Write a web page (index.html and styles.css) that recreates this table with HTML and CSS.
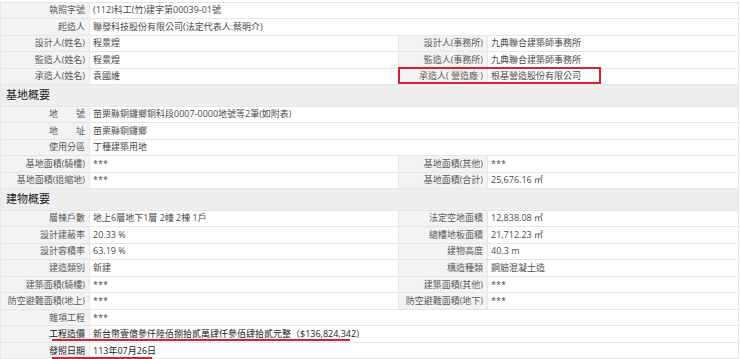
FILE: index.html
```html
<!DOCTYPE html>
<html lang="zh-Hant">
<head>
<meta charset="utf-8">
<title>建造執照資料</title>
<link rel="stylesheet" href="styles.css">
</head>
<body>
<div class="sheet">
<table class="info">
<colgroup><col class="c-label"><col class="c-value"><col class="c-label"><col class="c-value2"></colgroup>
<tbody>
<tr><th>執照字號</th><td colspan="3">(112)科工(竹)建字第00039-01號</td></tr>
<tr><th>起造人</th><td colspan="3">聯發科技股份有限公司(法定代表人:蔡明介)</td></tr>
<tr><th>設計人(姓名)</th><td>程景煌</td><th>設計人(事務所)</th><td>九典聯合建築師事務所</td></tr>
<tr><th>監造人(姓名)</th><td>程景煌</td><th>監造人(事務所)</th><td>九典聯合建築師事務所</td></tr>
<tr><th>承造人(姓名)</th><td>袁國維</td><th>承造人( 營造廠 )</th><td>根基營造股份有限公司</td></tr>
<tr class="section"><td colspan="4">基地概要</td></tr>
<tr><th>地　　號</th><td colspan="3">苗栗縣銅鑼鄉銅科段0007-0000地號等2筆(如附表)</td></tr>
<tr><th>地　　址</th><td colspan="3">苗栗縣銅鑼鄉</td></tr>
<tr><th>使用分區</th><td colspan="3">丁種建築用地</td></tr>
<tr><th>基地面積(騎樓)</th><td>***</td><th>基地面積(其他)</th><td>***</td></tr>
<tr><th>基地面積(退縮地)</th><td>***</td><th>基地面積(合計)</th><td>25,676.16 ㎡</td></tr>
<tr class="section"><td colspan="4">建物概要</td></tr>
<tr><th>層棟戶數</th><td>地上6層地下1層 2幢 2棟 1戶</td><th>法定空地面積</th><td>12,838.08 ㎡</td></tr>
<tr><th>設計建蔽率</th><td>20.33 %</td><th>總樓地板面積</th><td>21,712.23 ㎡</td></tr>
<tr><th>設計容積率</th><td>63.19 %</td><th>建物高度</th><td>40.3 m</td></tr>
<tr><th>建造類別</th><td>新建</td><th>構造種類</th><td>鋼筋混凝土造</td></tr>
<tr><th>建築面積(騎樓)</th><td>***</td><th>建築面積(其他)</th><td>***</td></tr>
<tr><th>防空避難面積(地上)</th><td>***</td><th>防空避難面積(地下)</th><td>***</td></tr>
<tr><th>雜項工程</th><td colspan="3">***</td></tr>
<tr class="strong"><th>工程造價</th><td colspan="3">新台幣壹億參仟陸佰捌拾貳萬肆仟參佰肆拾貳元整（$136,824,342）</td></tr>
<tr class="strong"><th>發照日期</th><td colspan="3">113年07月26日</td></tr>
</tbody>
</table>
<div class="mark-box"></div>
<div class="mark-line line-cost"></div>
<div class="mark-line line-date"></div>
</div>
</body>
</html>
```
FILE: styles.css
```css
html, body {
  margin: 0;
  padding: 0;
  background: #ffffff;
}

.sheet {
  position: relative;
  width: 740px;
  padding-top: 1.5px;
  font-family: "Open Sans", "Noto Sans CJK TC", sans-serif;
}

.info {
  width: 738px;
  border-collapse: collapse;
  table-layout: fixed;
  font-size: 9px;
}

.c-label { width: 89px; }
.c-value { width: 309px; }
.c-value2 { width: 251px; }

.info tr { height: 16.55px; }

.info th,
.info td {
  border: 1px solid #e6e6e6;
  padding: 0 4px;
  line-height: 14px;
  white-space: nowrap;
  overflow: hidden;
  vertical-align: middle;
  font-family: "Open Sans", "Noto Sans CJK TC", sans-serif;
}

.info th {
  background: #f3f3f3;
  color: #5a5a5a;
  font-weight: normal;
  text-align: right;
}

.info td {
  background: #ffffff;
  color: #4a4a4a;
  text-align: left;
  padding-left: 3px;
}

.info tr.section { height: 21.3px; }

.info tr.section td {
  background: #eeeeee;
  color: #222222;
  font-size: 11px;
  padding-left: 5px;
  border-color: #e6e6e6;
}

.info tr.strong th,
.info tr.strong td {
  color: #1a1a1a;
}

.mark-box {
  position: absolute;
  left: 398px;
  top: 67px;
  width: 199px;
  height: 13px;
  border: 2px solid #d8222c;
}

.mark-line {
  position: absolute;
  height: 2px;
  background: #d8222c;
  left: 52px;
}

.line-cost {
  top: 339px;
  width: 298px;
}

.line-date {
  top: 357px;
  width: 100px;
}
```
